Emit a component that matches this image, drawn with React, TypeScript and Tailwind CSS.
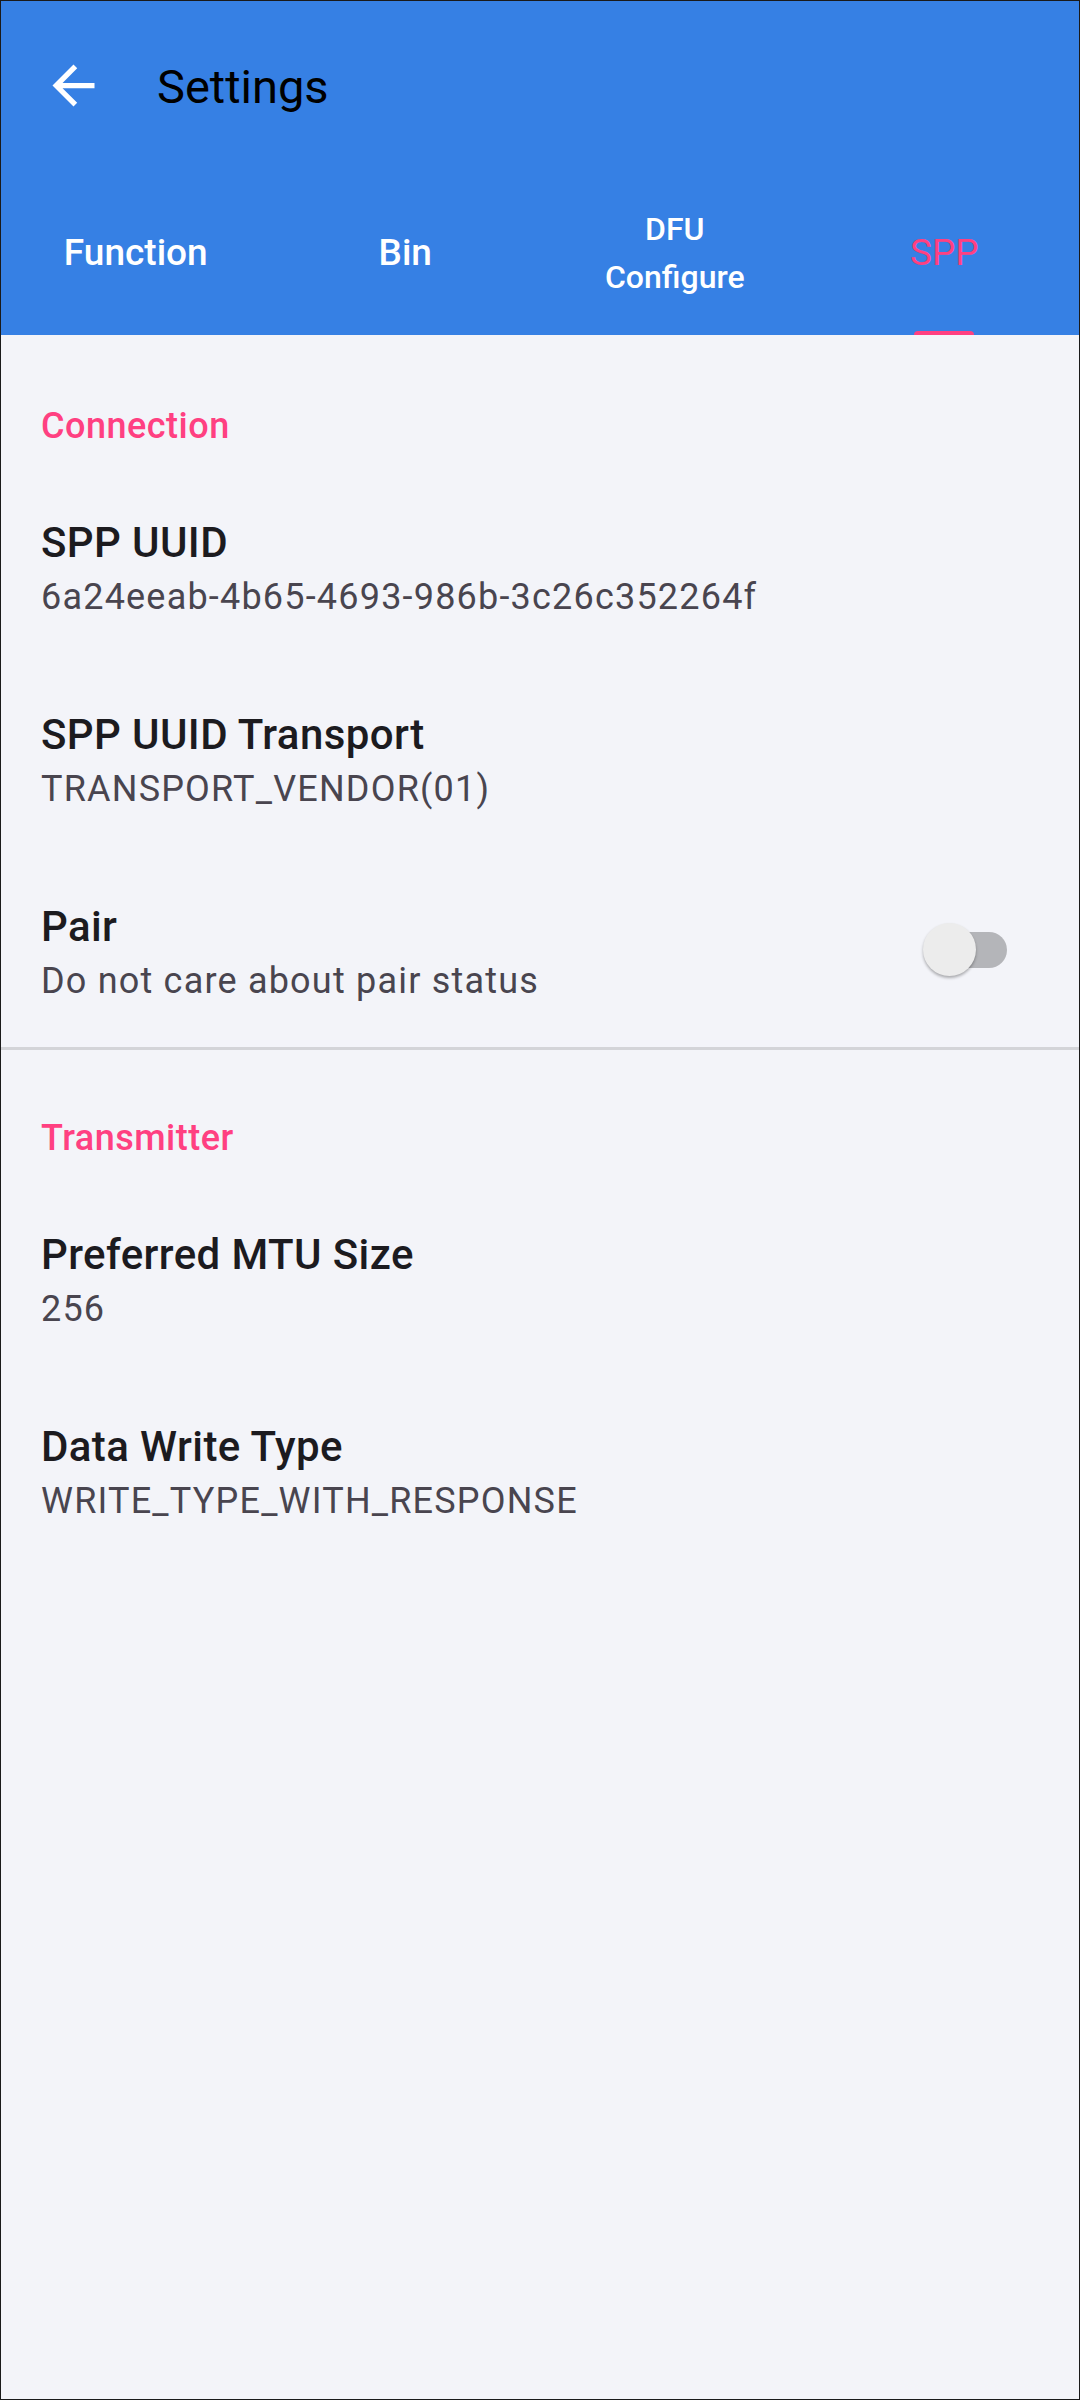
import React, { useState } from 'react';

const BLUE = 'bg-[#3680e4]';

const BackArrow: React.FC = () => (
  <svg viewBox="0 0 24 24" className="w-[63px] h-[63px] shrink-0" fill="#ffffff">
    <path d="M20 11H7.83l5.59-5.59L12 4l-8 8 8 8 1.41-1.41L7.83 13H20v-2z" />
  </svg>
);

const tabs = [
  { key: 'function', label: ['Function'] },
  { key: 'bin', label: ['Bin'] },
  { key: 'dfu', label: ['DFU', 'Configure'] },
  { key: 'spp', label: ['SPP'] },
];

const SectionHeader: React.FC<{ title: string; top: string }> = ({ title, top }) => (
  <div className={`${top} pb-[25px] pl-[40px] text-[36px] leading-[48px] tracking-[0.5px] font-medium text-[#ff4081]`}>
    {title}
  </div>
);

const PrefRow: React.FC<{ title: string; summary: string; last?: boolean; children?: React.ReactNode }> = ({
  title,
  summary,
  last,
  children,
}) => (
  <div className={`flex items-center pl-[40px] pr-[72px] pt-[42px] ${last ? 'pb-[38px]' : 'pb-[42px]'}`}>
    <div className="flex-1 min-w-0">
      <div className="text-[42px] leading-[52px] font-medium tracking-[0.4px] text-[#1c1b1f]">{title}</div>
      <div className="text-[36px] leading-[56px] tracking-[1.2px] text-[#49454f]">{summary}</div>
    </div>
    {children}
  </div>
);

const Switch: React.FC<{ on: boolean; onToggle: () => void }> = ({ on, onToggle }) => (
  <button onClick={onToggle} className="relative w-[84px] h-[54px] mb-[10px] shrink-0">
    <span className="absolute right-0 top-[9px] w-[82px] h-[36px] rounded-full bg-[#b4b5b9]" />
    <span
      className={`absolute top-0 w-[53px] h-[53px] rounded-full bg-[#ececec] shadow-[0_2px_3px_rgba(0,0,0,0.3)] ${
        on ? 'right-0' : 'left-0'
      }`}
    />
  </button>
);

const App: React.FC = () => {
  const [active, setActive] = useState('spp');
  const [pair, setPair] = useState(false);

  return (
    <div
      className="w-[1080px] h-[2400px] border border-[#1a1a1a] flex flex-col bg-[#f3f4f9] overflow-hidden"
      style={{ fontFamily: 'Roboto, "Noto Sans", sans-serif' }}
    >
      {/* App bar */}
      <div className={`${BLUE} shrink-0`}>
        <div className="h-[168px] flex items-center pl-[41px]">
          <BackArrow />
          <span className="ml-[52px] pt-[3px] text-[47px] leading-[56px] text-black">Settings</span>
        </div>

        {/* Tabs */}
        <div className="h-[166px] flex">
          {tabs.map((t) => {
            const sel = t.key === active;
            return (
              <button key={t.key} onClick={() => setActive(t.key)} className="w-[270px] flex flex-col items-center">
                <div className="flex-1 pt-[6px] flex flex-col items-center justify-center">
                  {t.label.length > 1 ? (
                    t.label.map((l) => (
                      <span key={l} className="text-[32px] leading-[48px] font-medium text-white">
                        {l}
                      </span>
                    ))
                  ) : (
                    <span
                      className={`text-[37px] leading-[44px] ${sel ? 'text-[#ff4081] font-normal' : 'text-white font-medium'}`}
                    >
                      {t.label[0]}
                    </span>
                  )}
                </div>
                <div className={`w-[60px] h-[4px] rounded-t-[4px] ${sel ? 'bg-[#ff4081]' : 'bg-transparent'}`} />
              </button>
            );
          })}
        </div>
      </div>

      {/* Preferences */}
      <div className="flex-1">
        <SectionHeader title="Connection" top="pt-[67px]" />
        <PrefRow title="SPP UUID" summary="6a24eeab-4b65-4693-986b-3c26c352264f" />
        <PrefRow title="SPP UUID Transport" summary="TRANSPORT_VENDOR(01)" />
        <PrefRow title="Pair" summary="Do not care about pair status" last>
          <Switch on={pair} onToggle={() => setPair(!pair)} />
        </PrefRow>
        <div className="h-[3px] bg-[#d3d4d8]" />

        <SectionHeader title="Transmitter" top="pt-[64px]" />
        <PrefRow title="Preferred MTU Size" summary="256" />
        <PrefRow title="Data Write Type" summary="WRITE_TYPE_WITH_RESPONSE" />
      </div>
    </div>
  );
};

export default App;
